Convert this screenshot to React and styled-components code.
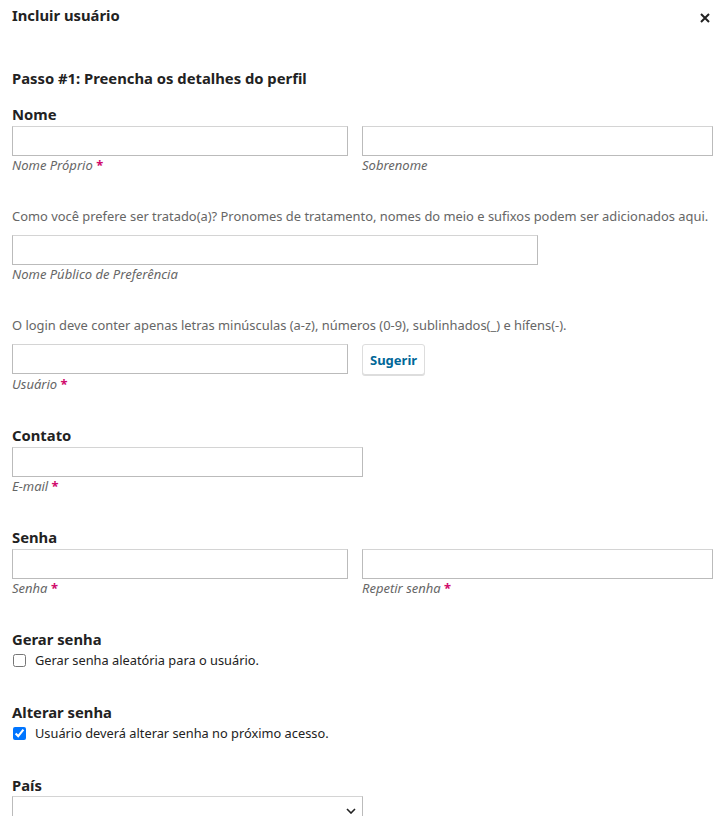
import styled, { createGlobalStyle } from "styled-components";

const GlobalStyle = createGlobalStyle`
  body {
    margin: 0;
    background: #fff;
    font-family: "Noto Sans", "Open Sans", sans-serif;
    color: #222;
  }
`;

export default function App() {
  return (
    <>
      <GlobalStyle />
      <SModal>
        <SHeader>
          <STitle>Incluir usuário</STitle>
          <SClose aria-label="Fechar">
            <svg width="10" height="10" viewBox="0 0 10 10">
              <path d="M1 1L9 9M9 1L1 9" stroke="#222" strokeWidth="2" />
            </svg>
          </SClose>
        </SHeader>

        <SStep>Passo #1: Preencha os detalhes do perfil</SStep>

        <SSection $first>
          <SLegend>Nome</SLegend>
          <STwoCols>
            <div>
              <SInput type="text" />
              <SLabel>Nome Próprio <SReq>*</SReq></SLabel>
            </div>
            <div>
              <SInput type="text" />
              <SLabel>Sobrenome</SLabel>
            </div>
          </STwoCols>
        </SSection>

        <SSection>
          <SDesc>Como você prefere ser tratado(a)? Pronomes de tratamento, nomes do meio e sufixos podem ser adicionados aqui.</SDesc>
          <SInput type="text" $width="526px" />
          <SLabel>Nome Público de Preferência</SLabel>
        </SSection>

        <SSection>
          <SDesc>O login deve conter apenas letras minúsculas (a-z), números (0-9), sublinhados(_) e hífens(-).</SDesc>
          <SInputRow>
            <SInput type="text" $width="336px" />
            <SButton type="button">Sugerir</SButton>
          </SInputRow>
          <SLabel>Usuário <SReq>*</SReq></SLabel>
        </SSection>

        <SSection>
          <SLegend>Contato</SLegend>
          <SInput type="email" $width="351px" />
          <SLabel>E-mail <SReq>*</SReq></SLabel>
        </SSection>

        <SSection>
          <SLegend>Senha</SLegend>
          <STwoCols>
            <div>
              <SInput type="password" />
              <SLabel>Senha <SReq>*</SReq></SLabel>
            </div>
            <div>
              <SInput type="password" />
              <SLabel>Repetir senha <SReq>*</SReq></SLabel>
            </div>
          </STwoCols>
        </SSection>

        <SSection>
          <SLegend>Gerar senha</SLegend>
          <SCheckRow>
            <SCheckbox type="checkbox" />
            Gerar senha aleatória para o usuário.
          </SCheckRow>
        </SSection>

        <SSection>
          <SLegend>Alterar senha</SLegend>
          <SCheckRow>
            <SCheckbox type="checkbox" defaultChecked />
            Usuário deverá alterar senha no próximo acesso.
          </SCheckRow>
        </SSection>

        <SSection>
          <SLegend $tight>País</SLegend>
          <SSelectBox>
            <SChevron width="10" height="6" viewBox="0 0 10 6">
              <path d="M1 1L5 5L9 1" stroke="#222" strokeWidth="1.6" fill="none" />
            </SChevron>
          </SSelectBox>
        </SSection>
      </SModal>
    </>
  );
}

const SModal = styled.div`
  padding: 5px 7px 0 12px;
  min-height: 816px;
  box-sizing: border-box;
`;

const SHeader = styled.div`
  display: flex;
  justify-content: space-between;
  align-items: flex-start;
`;

const STitle = styled.h1`
  margin: 0;
  font-size: 14.8px;
  line-height: 20px;
  font-weight: 700;
`;

const SClose = styled.button`
  border: none;
  background: none;
  padding: 0;
  margin: 8px 3px 0 0;
  width: 10px;
  height: 10px;
  display: flex;
  cursor: pointer;
`;

const SStep = styled.h2`
  margin: 43px 0 0;
  font-size: 14.8px;
  line-height: 20px;
  font-weight: 700;
`;

const SSection = styled.div`
  margin-top: ${(p) => (p.$first ? "16px" : "32px")};
`;

const SLegend = styled.div`
  font-size: 14.8px;
  line-height: 20px;
  font-weight: 700;
  margin-bottom: ${(p) => (p.$tight ? "1px" : "2px")};
`;

const SDesc = styled.p`
  margin: 0 0 9px;
  font-size: 12.9px;
  line-height: 20px;
  color: #666;
  white-space: nowrap;
`;

const STwoCols = styled.div`
  display: grid;
  grid-template-columns: 336px 351px;
  column-gap: 14px;
`;

const SInputRow = styled.div`
  display: flex;
  align-items: flex-start;
  gap: 14px;
`;

const SInput = styled.input`
  display: block;
  box-sizing: border-box;
  width: ${(p) => p.$width || "100%"};
  height: 30px;
  margin: 0;
  padding: 0 8px;
  border: 1px solid #bbb;
  border-top-color: #d4d4d4;
  border-radius: 0;
  background: #fff;
  font: inherit;
  font-size: 13px;
`;

const SLabel = styled.div`
  font-size: 13px;
  line-height: 18px;
  font-style: italic;
  color: #666;
`;

const SReq = styled.span`
  color: #d00a6c;
  font-style: normal;
  font-weight: 700;
`;

const SButton = styled.button`
  box-sizing: border-box;
  height: 31px;
  padding: 0 7px;
  border: 1px solid #ddd;
  border-radius: 3px;
  background: #fff;
  box-shadow: 0 1px 0 #ddd;
  color: #006798;
  font-family: inherit;
  font-size: 13px;
  font-weight: 700;
  cursor: pointer;
`;

const SCheckRow = styled.label`
  display: flex;
  align-items: center;
  gap: 9px;
  margin-top: -1px;
  font-size: 12.8px;
  line-height: 20px;
  color: #222;
`;

const SCheckbox = styled.input`
  width: 13px;
  height: 13px;
  margin: 0 0 0 1px;
`;

const SSelectBox = styled.div`
  box-sizing: border-box;
  width: 351px;
  height: 30px;
  border: 1px solid #bbb;
  border-top-color: #d4d4d4;
  display: flex;
  align-items: center;
  justify-content: flex-end;
  padding-right: 6px;
`;

const SChevron = styled.svg`
  display: block;
`;
